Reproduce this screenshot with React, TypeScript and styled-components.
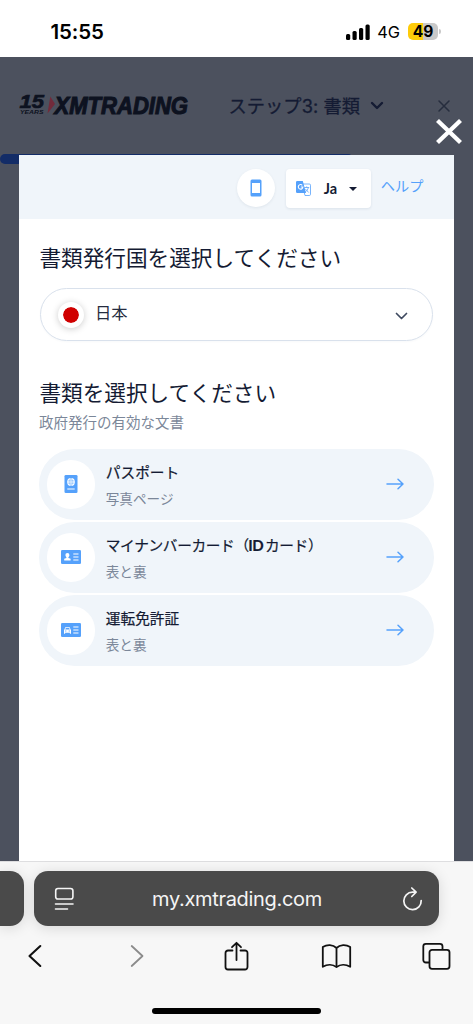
import React from "react";
import styled, { createGlobalStyle } from "styled-components";

const GlobalStyle = createGlobalStyle`
  *, *::before, *::after { box-sizing: border-box; }
  body { margin: 0; background: #fff; }
  button { font: inherit; color: inherit; background: none; border: 0; padding: 0; }
  h2, p { margin: 0; font-weight: 400; }
  svg { display: block; flex: none; overflow: visible; }
`;

const blue = "#55a1fb";
const ink = "#141b33";

const Screen = styled.div`
  width: 473px;
  height: 1024px;
  display: flex;
  flex-direction: column;
  overflow: hidden;
  color: ${ink};
  font-family: "Noto Sans", "Noto Sans CJK JP", sans-serif;
`;

const StatusBar = styled.header`
  height: 57px;
  flex: none;
  display: flex;
  align-items: center;
  justify-content: space-between;
  padding: 6px 32px 0 50.5px;
  color: #000;
  font-family: Inter, sans-serif;
`;

const Clock = styled.span`
  font-size: 20.5px;
  font-weight: 600;
  letter-spacing: -0.1px;
  line-height: 24px;
`;

const Signals = styled.div`
  display: flex;
  align-items: center;
`;

const Network = styled.span`
  margin: 1px 8px 0 7px;
  font-size: 16.4px;
  line-height: 20px;
`;

const Battery = styled.span`
  width: 30px;
  height: 17px;
  border-radius: 5px;
  background: linear-gradient(90deg, #fecb09 49%, #c9c9c9 49%);
  font-size: 15.5px;
  font-weight: 700;
  line-height: 17px;
  text-align: center;
`;

const BatteryTip = styled.i`
  width: 2px;
  height: 5px;
  margin-left: 1px;
  border-radius: 0 2px 2px 0;
  background: #c9c9c9;
`;

const Page = styled.main`
  position: relative;
  flex: 1;
  min-height: 0;
  background: #4c515e;
`;

const SiteHeader = styled.div`
  height: 97px;
  display: flex;
  align-items: center;
  padding: 0 23px 0 19px;
`;

const Step = styled.span`
  margin: 1px 10px 0 38.5px;
  font-family: Inter, "Noto Sans CJK JP", sans-serif;
  font-size: 18.2px;
  letter-spacing: 0.1px;
  line-height: 26px;
  font-weight: 400;
  -webkit-text-stroke: 0.3px ${ink};
  white-space: nowrap;
`;

const HeaderClose = styled.button`
  margin-left: auto;
`;

const Progress = styled.div`
  width: 353px;
  height: 10px;
  border-radius: 5px;
  background: #132c67;
`;

const CloseOverlay = styled.button`
  position: absolute;
  left: 435px;
  top: 62px;
`;

const Modal = styled.section`
  position: absolute;
  top: 98px;
  bottom: 0;
  left: 19.4px;
  width: 434.2px;
  background: #fff;
`;

const ModalBar = styled.div`
  height: 64px;
  display: flex;
  align-items: center;
  justify-content: flex-end;
  padding-right: 30.2px;
  background: #f0f5fa;
`;

const PhoneButton = styled.button`
  width: 38px;
  height: 38px;
  margin-top: 1px;
  display: grid;
  place-items: center;
  border-radius: 50%;
  background: #fff;
  box-shadow: 0 1px 3px #14305014;
`;

const Language = styled.button`
  width: 85px;
  height: 39px;
  margin: 3px 10px 0 10.4px;
  display: flex;
  align-items: center;
  padding: 0 14px 0 10px;
  border-radius: 4px;
  background: #fff;
  box-shadow: 0 1px 3px #14305018;
  font-family: Lato, sans-serif;
  font-size: 14.5px;
  font-weight: 700;
`;

const LanguageCode = styled.span`
  flex: 1;
  margin-top: -1px;
  padding-left: 13px;
  text-align: left;
`;

const Help = styled.a`
  margin-top: -2px;
  color: ${blue};
  font-size: 14.2px;
  line-height: 20px;
`;

const Content = styled.div`
  padding: 24px 19.2px 0 20px;
`;

const Title = styled.h2`
  font-family: "Noto Sans CJK JP", sans-serif;
  font-size: 21.65px;
  line-height: 28px;
`;

const Country = styled.button`
  width: 393px;
  height: 53px;
  margin: 17px 0 37px 0.6px;
  display: flex;
  align-items: center;
  padding: 0 24px 0 17px;
  border: 1px solid #d9e1ec;
  border-radius: 27px;
  box-shadow: 0 1px 2px #14305008;
`;

const Flag = styled.span`
  width: 26px;
  height: 26px;
  margin-top: 1px;
  border: 5px solid #fff;
  border-radius: 50%;
  background: #d00000;
  background-clip: padding-box;
  box-shadow: 0 1px 7px #0003;
`;

const CountryName = styled.span`
  flex: 1;
  margin: -4px 0 0 11px;
  color: #252c40;
  font-size: 16.3px;
  line-height: 22px;
  text-align: left;
`;

const Hint = styled.p`
  margin: 4px 0 15px -0.4px;
  color: #7b8799;
  font-family: "Noto Sans CJK JP", sans-serif;
  font-size: 14.5px;
  line-height: 24px;
`;

const DocumentList = styled.div`
  display: flex;
  flex-direction: column;
  gap: 2.4px;
`;

const DocumentCard = styled.button`
  width: 395.4px;
  height: 70.6px;
  margin-left: -0.6px;
  display: flex;
  align-items: center;
  padding: 0 30px 0 8px;
  border-radius: 36px;
  background: #f0f5fa;
  text-align: left;
`;

const IconDisc = styled.span`
  width: 48.6px;
  height: 48.6px;
  flex: none;
  display: grid;
  place-items: center;
  border-radius: 50%;
  background: #fff;
`;

const Labels = styled.span`
  flex: 1;
  display: flex;
  flex-direction: column;
  gap: 5px;
  margin: 2px 0 0 10.4px;
  white-space: nowrap;
`;

const DocumentName = styled.span<{ $tracking?: number }>`
  font-family: "Noto Sans CJK JP", sans-serif;
  font-size: 14.7px;
  letter-spacing: ${({ $tracking = 0 }) => $tracking}px;
  line-height: 22px;
  -webkit-text-stroke: 0.22px ${ink};
`;

const Latin = styled.b`
  margin: 0 1.5px 0 -0.5px;
  font-family: Lato, sans-serif;
  font-size: 15px;
  font-weight: 700;
`;

const Side = styled.span`
  color: #7b8799;
  font-size: 13.6px;
  line-height: 22px;
`;

const Browser = styled.footer`
  height: 163px;
  flex: none;
  display: flex;
  flex-direction: column;
  align-items: center;
  border-top: 1px solid #dedee0;
  background: #f7f7f7;
`;

const AddressRow = styled.div`
  width: 100%;
  height: 64px;
  display: flex;
  gap: 10px;
  padding-top: 9px;
`;

const tab = `
  height: 55px;
  background: #4a4a4a;
  box-shadow: 0 2px 14px #0002;
`;

const PreviousTab = styled.div`
  ${tab}
  width: 24px;
  border-radius: 0 14px 14px 0;
`;

const Address = styled.div`
  ${tab}
  width: 405px;
  display: flex;
  align-items: center;
  justify-content: space-between;
  padding: 0 16px 0 20px;
  border-radius: 14px;
  color: #f5f5f5;
  font-family: Inter, sans-serif;
  font-size: 20px;
  letter-spacing: -0.32px;
`;

const Url = styled.span`
  margin-left: -2px;
`;

const Toolbar = styled.nav`
  width: 100%;
  height: 62px;
  display: grid;
  grid-template-columns: 85px 121px 80px 1fr 73px;
  align-items: center;
  justify-items: center;
`;

const ToolButton = styled.button<{ $shift?: number }>`
  padding-left: ${({ $shift = 0 }) => Math.max($shift, 0)}px;
  padding-right: ${({ $shift = 0 }) => Math.max(-$shift, 0)}px;
`;

const HomeIndicator = styled.div`
  width: 169px;
  height: 6px;
  margin-top: 20px;
  border-radius: 3px;
  background: #000;
`;

type StrokeProps = {
  w: number;
  h: number;
  d: string;
  color?: string;
  weight?: number;
  round?: boolean;
};

const StrokeIcon = ({ w, h, d, color = "#111", weight = 2, round = true }: StrokeProps) => (
  <svg width={w} height={h} viewBox={`0 0 ${w} ${h}`} fill="none" stroke={color} strokeWidth={weight}
    strokeLinecap={round ? "round" : "butt"} strokeLinejoin="round">
    <path d={d} />
  </svg>
);

const Logo = () => (
  <svg width="171" height="22" viewBox="0 0 171 22" fill="#0d1220" fontFamily="Liberation Sans, sans-serif" fontStyle="italic" fontWeight="700">
    <text x="0.5" y="13.4" fontSize="17.5" textLength="24.5" lengthAdjust="spacingAndGlyphs" stroke="#0d1220" strokeWidth=".6">15</text>
    <text x="1" y="19.3" fontSize="6.2" textLength="23.5" lengthAdjust="spacingAndGlyphs">YEARS</text>
    <path d="M31.3 1.5 36 9 28.5 18.5Z" fill="#722b3b" />
    <text x="35.5" y="18.7" fontSize="24" textLength="133.5" lengthAdjust="spacingAndGlyphs" stroke="#0d1220" strokeWidth="1.1">XMTRADING</text>
  </svg>
);

const CellBars = () => (
  <svg width="24" height="16" viewBox="0 0 24 16" fill="#000">
    <rect x="0" y="10" width="4.2" height="6" rx="1.5" />
    <rect x="6.5" y="7" width="4.2" height="9" rx="1.5" />
    <rect x="13" y="4" width="4.2" height="12" rx="1.5" />
    <rect x="19.5" y="0.5" width="4.2" height="15.5" rx="1.5" />
  </svg>
);

const PhoneIcon = () => (
  <svg width="12" height="18" viewBox="0 0 12 18">
    <path fill={blue} fillRule="evenodd" d="M2 .5h8a1.5 1.5 0 0 1 1.5 1.5v14a1.5 1.5 0 0 1-1.5 1.5H2A1.5 1.5 0 0 1 .5 16V2A1.5 1.5 0 0 1 2 .5ZM2 4v10h8V4Z" />
  </svg>
);

const TranslateIcon = () => (
  <svg width="15" height="15" viewBox="0 0 15 15">
    <path fill="#fff" stroke={blue} strokeWidth=".8" d="M6 3h7.3a1.2 1.2 0 0 1 1.2 1.2v9.1a1.2 1.2 0 0 1-1.2 1.2H9Z" />
    <path stroke={blue} strokeWidth=".8" fill="none" d="M8.2 6.5h5M10.7 5.4v1M12.3 6.7c-.5 2-1.8 3.6-3.2 4.5M9.2 7.8l3.5 3.7" />
    <path fill={blue} d="M1.3 0h5.5L10 12H1.3A1.3 1.3 0 0 1 0 10.7V1.3A1.3 1.3 0 0 1 1.3 0Z" />
    <path stroke="#fff" strokeWidth="1.1" fill="none" d="M6.3 4.3A2.3 2.3 0 1 0 6.9 6H4.8" />
  </svg>
);

const PassportIcon = () => (
  <svg width="14" height="18" viewBox="0 0 14 18">
    <rect x=".5" width="13" height="18" rx="1.3" fill={blue} />
    <circle cx="7" cy="7" r="3.9" fill="#fff" />
    <path d="M3.5 5.8h7M3.5 8.2h7M7 3.2v7.6M7 3.2c-2.4 2.3-2.4 5.3 0 7.6M7 3.2c2.4 2.3 2.4 5.3 0 7.6" stroke={blue} strokeWidth=".4" fill="none" />
    <path d="M3.3 14h7.4" stroke="#fff" />
  </svg>
);

const CardIcon = ({ car = false }: { car?: boolean }) => (
  <svg width="20" height="14" viewBox="0 0 20 14">
    <rect width="20" height="14" rx="1.3" fill={blue} />
    <path d="M12.3 4h5.2M12.3 7h5.2M12.3 10h5.2" stroke="#fff" strokeWidth="1.1" />
    {car ? (
      <path fill="#fff" fillRule="evenodd" d="M4.3 4.3h4.4l.9 2.3.4.5v3.6H8.9v-.9H4.1v.9H3V7.1l.4-.5ZM4.8 5l-.6 1.6h4.6L8.2 5ZM4.2 7.5v.9h1.1v-.9Zm3.5 0v.9h1.1v-.9Z" />
    ) : (
      <path fill="#fff" d="M6.4 3a2 2 0 0 1 2 2.1c0 .9-.4 1.7-1 2.1v.7l2.2.9V10.5H3.2V8.8l2.2-.9v-.7c-.6-.4-1-1.2-1-2.1a2 2 0 0 1 2-2.1Z" />
    )}
  </svg>
);

const documents = [
  { icon: <PassportIcon />, name: "パスポート", side: "写真ページ", tracking: 0 },
  { icon: <CardIcon />, name: <>マイナンバーカード（<Latin>ID</Latin>カード）</>, side: "表と裏", tracking: -0.36 },
  { icon: <CardIcon car />, name: "運転免許証", side: "表と裏", tracking: 0 },
];

export default function App() {
  return (
    <Screen>
      <GlobalStyle />
      <StatusBar>
        <Clock>15:55</Clock>
        <Signals>
          <CellBars />
          <Network>4G</Network>
          <Battery>49</Battery>
          <BatteryTip />
        </Signals>
      </StatusBar>

      <Page>
        <SiteHeader>
          <Logo />
          <Step>ステップ3: 書類</Step>
          <StrokeIcon w={14} h={10} d="M2 2l5 5 5-5" color={ink} weight={2.4} />
          <HeaderClose aria-label="Close step">
            <StrokeIcon w={12} h={12} d="M1 1l10 10M11 1L1 11" color="#262d3e" weight={1.5} />
          </HeaderClose>
        </SiteHeader>
        <Progress />

        <Modal>
          <ModalBar>
            <PhoneButton aria-label="Continue on phone"><PhoneIcon /></PhoneButton>
            <Language>
              <TranslateIcon />
              <LanguageCode>Ja</LanguageCode>
              <svg width="8" height="4" viewBox="0 0 8 4"><path d="M0 0h8L4 4Z" fill={ink} /></svg>
            </Language>
            <Help>ヘルプ</Help>
          </ModalBar>
          <Content>
            <Title>書類発行国を選択してください</Title>
            <Country>
              <Flag />
              <CountryName>日本</CountryName>
              <StrokeIcon w={13} h={8} d="M1.5 2.5l5 5 5-5" color="#3f4a60" weight={1.7} />
            </Country>
            <Title>書類を選択してください</Title>
            <Hint>政府発行の有効な文書</Hint>
            <DocumentList>
              {documents.map((doc, i) => (
                <DocumentCard key={i}>
                  <IconDisc>{doc.icon}</IconDisc>
                  <Labels>
                    <DocumentName $tracking={doc.tracking}>{doc.name}</DocumentName>
                    <Side>{doc.side}</Side>
                  </Labels>
                  <StrokeIcon w={18} h={12} d="M1 6h16M12 1.2l5 4.8-5 4.8" color={blue} weight={1.5} />
                </DocumentCard>
              ))}
            </DocumentList>
          </Content>
        </Modal>
        <CloseOverlay aria-label="Close">
          <StrokeIcon w={28} h={25} d="M2.5 1.5L25.5 23.5M25.5 1.5L2.5 23.5" color="#fff" weight={4.3} round={false} />
        </CloseOverlay>
      </Page>

      <Browser>
        <AddressRow>
          <PreviousTab />
          <Address>
            <svg width="20" height="24" viewBox="0 0 20 24" fill="none" stroke="#f5f5f5" strokeWidth="1.6" strokeLinecap="round">
              <rect x="1.7" y="1.5" width="17.2" height="10.5" rx="2.3" />
              <path d="M1.5 17h17.5M1.5 22h12" />
            </svg>
            <Url>my.xmtrading.com</Url>
            <StrokeIcon w={21} h={24} d="M13.3 5.2h-2.8A8.7 8.7 0 1 0 19.2 13.5M9.8 1l4.3 4.2-4.3 4.3" color="#f5f5f5" weight={1.7} />
          </Address>
        </AddressRow>
        <Toolbar>
          <ToolButton $shift={-16} aria-label="Back">
            <StrokeIcon w={15} h={24} d="M13.3 1L2.5 11l10.8 10" weight={2.1} />
          </ToolButton>
          <ToolButton $shift={-16} aria-label="Forward">
            <StrokeIcon w={15} h={24} d="M1.7 1l10.8 10L1.7 21" color="#8b8b8b" weight={1.8} />
          </ToolButton>
          <ToolButton $shift={-19} aria-label="Share">
            <StrokeIcon w={25} h={30} d="M8.5 8.5H4A2.5 2.5 0 0 0 1.5 11v14A2.5 2.5 0 0 0 4 27.5h17a2.5 2.5 0 0 0 2.5-2.5V11A2.5 2.5 0 0 0 21 8.5h-4.5M12.5 18V.8M8 5.2L12.5.8 17 5.2" weight={1.8} />
          </ToolButton>
          <ToolButton $shift={-13} aria-label="Bookmarks">
            <StrokeIcon w={31} h={26} d="M15.5 4C12 .4 6 .4 1.8 3v19.8c4.4-2.6 10-2.6 13.7.3 3.7-2.9 9.3-2.9 13.7-.3V3C25 .4 19 .4 15.5 4v19.1" weight={1.8} />
          </ToolButton>
          <ToolButton aria-label="Tabs">
            <StrokeIcon w={29} h={28} d="M7.5 19.5H3.8A2.5 2.5 0 0 1 1.3 17V3.3A2.5 2.5 0 0 1 3.8.8H18A2.5 2.5 0 0 1 20.5 3.3v3.5M10 6.8h15A2.5 2.5 0 0 1 27.5 9.3v14a2.5 2.5 0 0 1-2.5 2.5H10a2.5 2.5 0 0 1-2.5-2.5v-14A2.5 2.5 0 0 1 10 6.8Z" weight={1.8} />
          </ToolButton>
        </Toolbar>
        <HomeIndicator />
      </Browser>
    </Screen>
  );
}
